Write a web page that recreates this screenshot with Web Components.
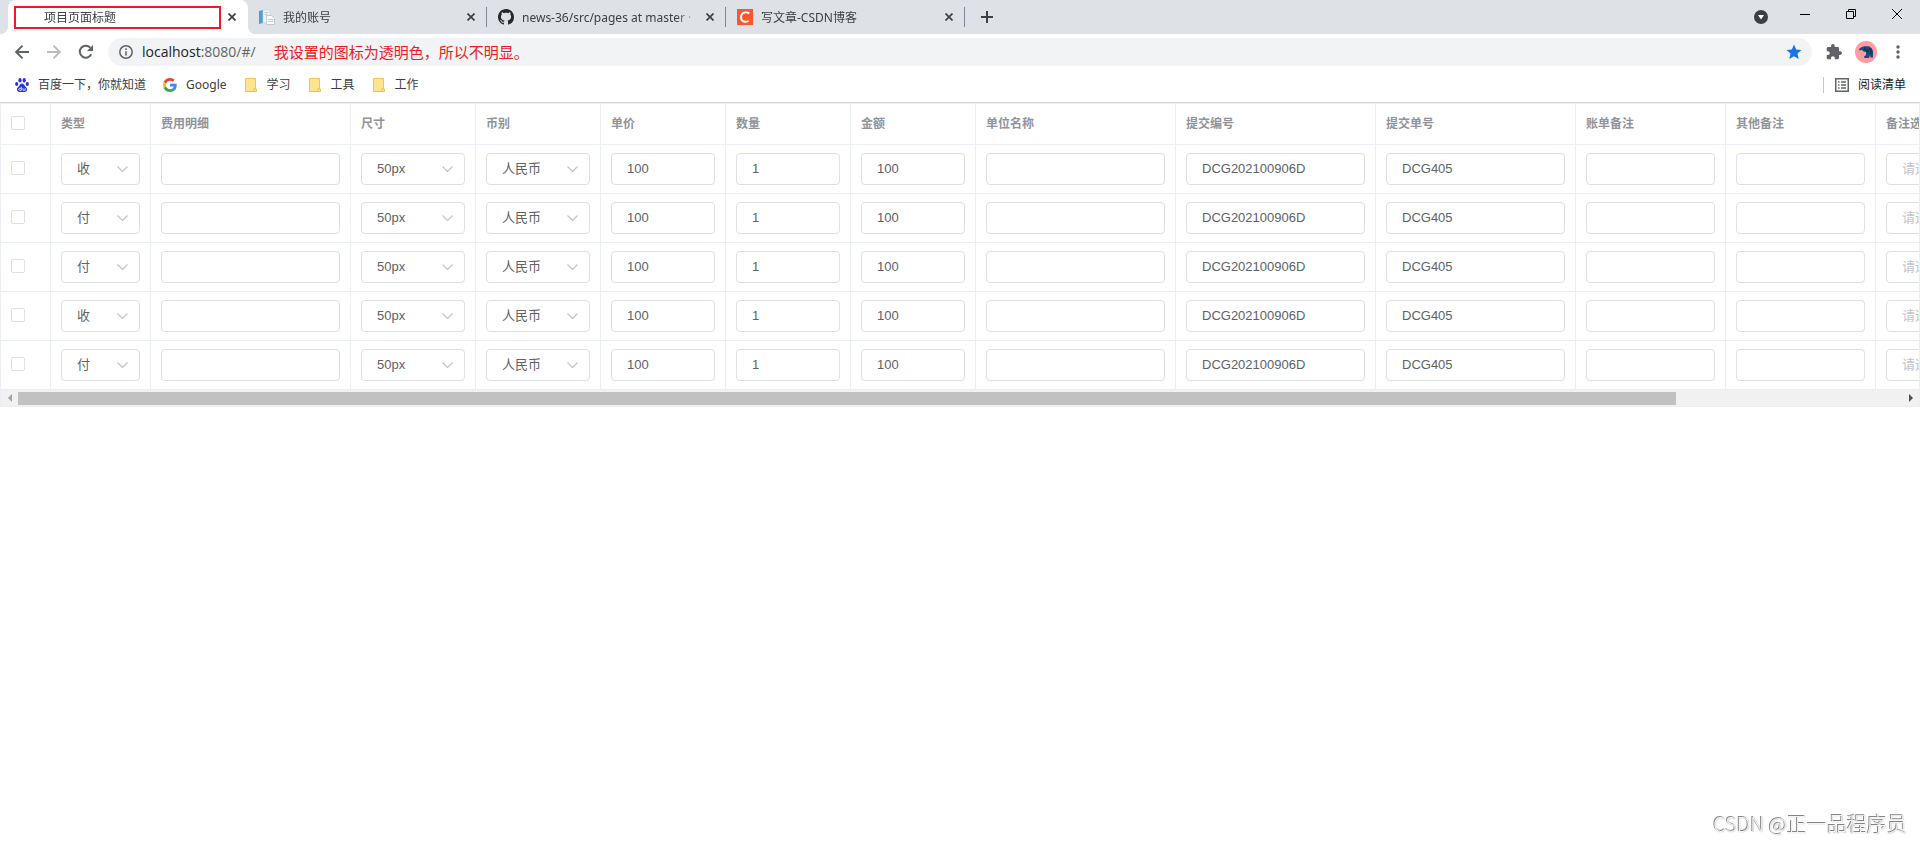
<!DOCTYPE html>
<html lang="zh-CN">
<head>
<meta charset="utf-8">
<title>项目页面标题</title>
<style>
  body { margin: 0; min-height: 100vh; background: #fff; font-family: "Noto Sans", "Noto Sans CJK SC", sans-serif; font-size: 12px; line-height: 16px; color: #3c4043; }
</style>
</head>
<body>
<browser-window></browser-window>

<template id="t-window">
  <style>
    :host { display: block; }
    header { border-bottom: 1px solid #d5d7dd; }
  </style>
  <header>
    <tab-strip></tab-strip>
    <address-bar></address-bar>
    <bookmark-bar></bookmark-bar>
  </header>
  <main><fee-table></fee-table></main>
  <water-mark>CSDN @正一品程序员</water-mark>
</template>

<template id="t-strip">
  <style>
    :host { display: flex; height: 34px; background: #dee1e6; padding-left: 8px; }
    .new, .win button { border: 0; background: none; padding: 0; display: grid; place-items: center; }
    .new { width: 28px; height: 28px; margin: 3px 0 0 8px; }
    .win { margin-left: auto; display: flex; }
    .win button { width: 46px; height: 28px; }
    .win .search { width: 42px; height: 34px; }
  </style>
  <browser-tab active><svg slot="icon" width="16" height="16"></svg>项目页面标题</browser-tab>
  <browser-tab>
    <svg slot="icon" width="16" height="16" viewBox="0 0 16 16"><path d="M0 2l4-1v13l-4 1z" fill="#4a9fd4"/><path d="M4 1h7v13H4z" fill="#f2f5f8" stroke="#c9d2da" stroke-width=".7"/><path d="M5.500 3.500h4M5.500 5.500h3" stroke="#bcc6ce"/><path d="M7.500 6.500h5l3 3v6h-8z" fill="#fafbfc" stroke="#b8c1c9" stroke-width=".8"/><path d="M9 10.500h5M9 12.500h5" stroke="#c5ccd3"/></svg>我的账号</browser-tab>
  <browser-tab divided>
    <svg slot="icon" width="16" height="16" viewBox="0 0 16 16"><path fill="#24292e" d="M8 0C3.58 0 0 3.58 0 8c0 3.54 2.29 6.53 5.47 7.59.4.07.55-.17.55-.38 0-.19-.01-.82-.01-1.49-2.01.37-2.53-.49-2.69-.94-.09-.23-.48-.94-.82-1.13-.28-.15-.68-.52-.01-.53.63-.01 1.08.58 1.23.82.72 1.21 1.87.87 2.33.66.07-.52.28-.87.51-1.07-1.78-.2-3.64-.89-3.64-3.95 0-.87.31-1.59.82-2.15-.08-.2-.36-1.02.08-2.12 0 0 .67-.21 2.2.82.64-.18 1.32-.27 2-.27s1.36.09 2 .27c1.53-1.04 2.2-.82 2.2-.82.44 1.1.16 1.92.08 2.12.51.56.82 1.27.82 2.15 0 3.07-1.87 3.75-3.65 3.95.29.25.54.73.54 1.48 0 1.07-.01 1.93-.01 2.2 0 .21.15.46.55.38A8.01 8.01 0 0 0 16 8c0-4.42-3.58-8-8-8z"/></svg>news-36/src/pages at master · </browser-tab>
  <browser-tab divided>
    <svg slot="icon" width="16" height="16" viewBox="0 0 16 16"><rect width="16" height="16" fill="#fc5531"/><path d="M12.300 4.400C9 2.300 4.300 3.400 4 8c-.2 4.600 4 5.700 7.800 4" fill="none" stroke="#fff" stroke-width="1.900"/></svg>写文章-CSDN博客</browser-tab>
  <button class="new" aria-label="New tab"><svg width="12" height="12"><path d="M6 0v12M0 6h12" stroke="#3c4043" stroke-width="2"/></svg></button>
  <div class="win">
    <button class="search" aria-label="Search tabs"><svg width="14" height="14"><circle cx="7" cy="7" r="7" fill="#3c4043"/><path d="M4 5h6L7 9.500z" fill="#fff"/></svg></button>
    <button aria-label="Minimize"><svg width="10" height="10"><path d="M0 5.500h10" stroke="#000"/></svg></button>
    <button aria-label="Restore"><svg width="10" height="10"><path d="M.5 2.500h7v7h-7zM2.500 2.500v-2h7v7h-2" fill="none" stroke="#000"/></svg></button>
    <button aria-label="Close"><svg width="10" height="10"><path d="M0 0l10 10M10 0L0 10" stroke="#000"/></svg></button>
  </div>
</template>

<template id="t-tab">
  <style>
    :host { display: flex; align-items: center; box-sizing: border-box; width: 239px; height: 34px; padding: 0 8px 0 11px; gap: 8px; position: relative; }
    :host([active]) { width: 240px; padding-left: 12px; background: #fff; border-radius: 8px 8px 0 0; }
    :host([active])::before, :host([active])::after { content: ""; position: absolute; bottom: 0; width: 8px; height: 8px; }
    :host([active])::before { left: -8px; background: radial-gradient(circle at 0 0, #dee1e6 8px, #fff 8px); }
    :host([active])::after { right: -8px; background: radial-gradient(circle at 100% 0, #dee1e6 8px, #fff 8px); }
    :host([divided])::before, :host(:last-of-type)::after { content: ""; position: absolute; top: 7px; width: 1px; height: 20px; background: #80868b; }
    :host([divided])::before { left: -1px; }
    :host(:last-of-type)::after { right: 0; }
    .mark { display: none; }
    :host([active]) .mark { display: block; position: absolute; box-sizing: border-box; left: 6px; top: 6px; width: 207px; height: 23px; border: 2px solid #ec1c24; }
    .title { flex: 1; min-width: 0; padding-top: 1px; overflow: hidden; white-space: nowrap; -webkit-mask-image: linear-gradient(90deg, #000 154px, transparent 176px); mask-image: linear-gradient(90deg, #000 154px, transparent 176px); }
    ::slotted(svg) { display: block; }
    button { width: 16px; height: 16px; border: 0; padding: 0; background: none; display: grid; place-items: center; }
  </style>
  <slot name="icon"></slot>
  <span class="title"><slot></slot></span>
  <button aria-label="Close tab"><svg width="8" height="8"><path d="M.5.500l7 7M7.500.500l-7 7" stroke="#3c4043" stroke-width="1.700"/></svg></button>
  <span class="mark"></span>
</template>

<template id="t-address">
  <style>
    :host { display: flex; align-items: center; height: 36px; padding: 0 6px; }
    button { flex: none; width: 32px; height: 32px; border: 0; padding: 0; background: none; display: grid; place-items: center; }
    .pill { flex: 1; display: flex; align-items: center; height: 28px; margin: 0 6px; padding: 0 2px 0 11px; border-radius: 14px; background: #f1f3f4; }
    .url { margin-left: 9px; font-family: "Open Sans", sans-serif; font-size: 14px; line-height: 20px; color: #5f6368; white-space: nowrap; }
    .url b { font-weight: 400; color: #202124; }
    .note { margin-left: 18px; font-size: 15px; line-height: 20px; color: #ec1c24; white-space: nowrap; }
    .star { margin-left: auto; }
  </style>
  <button aria-label="Back"><svg width="14" height="14"><path d="M14 7H1.500M7.500 .700L1.200 7l6.300 6.300" fill="none" stroke="#5f6368" stroke-width="1.900"/></svg></button>
  <button aria-label="Forward"><svg width="14" height="14"><path d="M0 7h12.500M6.500 .700L12.800 7l-6.300 6.300" fill="none" stroke="#bbbdc0" stroke-width="1.900"/></svg></button>
  <button aria-label="Reload"><svg width="16" height="16" viewBox="0 0 16 16"><path d="M13.200 10.300A6 6 0 1 1 12.300 3.700" fill="none" stroke="#5f6368" stroke-width="2"/><path d="M15 1v6H9z" fill="#5f6368"/></svg></button>
  <div class="pill">
    <svg width="14" height="14"><circle cx="7" cy="7" r="6.200" fill="none" stroke="#5f6368" stroke-width="1.500"/><path d="M7 6.200v4.300M7 3.300v1.600" stroke="#5f6368" stroke-width="1.500"/></svg>
    <span class="url"><b>localhost</b>:8080/#/</span>
    <span class="note">我设置的图标为透明色，所以不明显。</span>
    <button class="star" aria-label="Bookmark"><svg width="16" height="16" viewBox="0 0 16 16"><path d="M8 .500l2.200 5 5.300.500-4 3.600 1.200 5.400L8 12.200 3.300 15l1.200-5.400L.5 6l5.300-.500z" fill="#1a73e8"/></svg></button>
  </div>
  <button aria-label="Extensions"><svg width="16" height="16" viewBox="1 1 22 22"><path fill="#5f6368" d="M20.500 11H19V7a2 2 0 0 0-2-2h-4V3.500a2.500 2.500 0 0 0-5 0V5H4a2 2 0 0 0-2 2v3.800h1.500a2.700 2.700 0 0 1 0 5.400H2V20a2 2 0 0 0 2 2h3.800v-1.500a2.700 2.700 0 0 1 5.400 0V22H17a2 2 0 0 0 2-2v-4h1.500a2.500 2.500 0 0 0 0-5z"/></svg></button>
  <button aria-label="Profile"><svg width="22" height="22" viewBox="0 0 22 22"><circle cx="11" cy="11" r="11" fill="#ff9ca3"/><path d="M4 8l2.500-1.800L9 5.200h5l2.800 2L18 10v6.500h-2.500L15 14l-1 3H9.500l-.5-1.500 2-1.500V11l-2.500-.5L7 9 4.500 9.500z" fill="#1b4a74"/><path d="M9.500 6.500l1 3 2.500 1.500V8M14.500 7l1.500 3v3" stroke="#0c2a48" fill="none"/></svg></button>
  <button aria-label="Menu"><svg width="4" height="14"><circle cx="2" cy="2" r="1.700" fill="#5f6368"/><circle cx="2" cy="7" r="1.700" fill="#5f6368"/><circle cx="2" cy="12" r="1.700" fill="#5f6368"/></svg></button>
</template>

<template id="t-bookmarks">
  <style>
    :host { display: flex; align-items: center; box-sizing: border-box; height: 32px; padding: 0 14px 2px 15px; }
    .reading { margin-left: auto; display: flex; align-items: center; height: 16px; padding: 0 0 0 11px; gap: 9px; border: 0; border-left: 1px solid #c4c7cb; background: none; font: inherit; color: #202124; }
    nav { display: flex; gap: 17px; }
  </style>
  <nav>
    <book-mark><svg slot="icon" width="14" height="14" viewBox="0 0 14 14" fill="#2932e1"><ellipse cx="1.700" cy="6" rx="1.600" ry="2"/><ellipse cx="5" cy="2.300" rx="1.600" ry="2.200"/><ellipse cx="9.200" cy="2.300" rx="1.600" ry="2.200"/><ellipse cx="12.300" cy="6" rx="1.600" ry="2"/><path d="M7 5.600c-1.700 0-2 1.600-3.300 2.800C2.200 9.600 1.700 10.500 2 12c.6 2.500 3 1.900 5 1.900s4.400.6 5-1.900c.3-1.500-.2-2.400-1.700-3.600C9 7.200 8.700 5.600 7 5.600z"/><path d="M6.300 8.700v3.600H4.600c-1.200 0-1.200-2 0-2h1.700M8 10.200v2h2.200v-2" fill="none" stroke="#fff" stroke-width=".8"/></svg>百度一下，你就知道</book-mark>
    <book-mark><svg slot="icon" width="14" height="14" viewBox="0 0 48 48"><path fill="#ea4335" d="M24 9.500c3.540 0 6.710 1.220 9.210 3.600l6.850-6.850C35.900 2.380 30.470 0 24 0 14.620 0 6.510 5.380 2.560 13.220l7.980 6.190C12.430 13.720 17.740 9.500 24 9.500z"/><path fill="#4285f4" d="M46.980 24.550c0-1.570-.15-3.090-.38-4.550H24v9.020h12.940c-.58 2.960-2.260 5.480-4.780 7.180l7.730 6c4.510-4.180 7.090-10.360 7.090-17.650z"/><path fill="#fbbc05" d="M10.530 28.590c-.48-1.450-.76-2.990-.76-4.590s.27-3.140.76-4.590l-7.980-6.190C.92 16.460 0 20.120 0 24s.92 7.540 2.560 10.780l7.970-6.190z"/><path fill="#34a853" d="M24 48c6.480 0 11.930-2.130 15.890-5.810l-7.730-6c-2.150 1.450-4.920 2.300-8.160 2.300-6.260 0-11.570-4.220-13.470-9.910l-7.980 6.190C6.510 42.620 14.620 48 24 48z"/></svg>Google</book-mark>
    <book-mark><folder-icon slot="icon"></folder-icon>学习</book-mark>
    <book-mark><folder-icon slot="icon"></folder-icon>工具</book-mark>
    <book-mark><folder-icon slot="icon"></folder-icon>工作</book-mark>
  </nav>
  <button class="reading"><svg width="14" height="14"><path d="M.75.750h12.500v12.500H.750z" fill="none" stroke="#5f6368" stroke-width="1.500"/><path d="M3 4h1.500M3 7h1.500M3 10h1.500M6 4h5M6 7h5M6 10h5" stroke="#5f6368" stroke-width="1.500"/></svg>阅读清单</button>
</template>

<template id="t-bookmark">
  <style>
    :host { display: block; }
    a { display: flex; align-items: center; gap: 9px; color: #3c4043; text-decoration: none; white-space: nowrap; }
  </style>
  <a href="#/"><slot name="icon"></slot><span><slot></slot></span></a>
</template>

<template id="t-folder">
  <style>:host { display: block; } svg { display: block; }</style>
  <svg width="14" height="14"><path d="M1.500.500h10v10.500h1v2.500h-11z" fill="#ffe48f" stroke="#ecc650"/><path d="M10 13v-2.500h1.500" fill="none" stroke="#ecc650"/></svg>
</template>

<template id="t-table">
  <style>
    :host { display: block; border: 1px solid #ebeef5; }
    .view { overflow: hidden; }
    table { table-layout: fixed; width: 2175px; border-collapse: separate; border-spacing: 0; }
    th, td { box-sizing: border-box; padding: 0 10px; border-right: 1px solid #ebeef5; border-bottom: 1px solid #ebeef5; text-align: left; white-space: nowrap; }
    th { height: 41px; color: #909399; font-weight: 700; }
    td { height: 49px; }
    tbody tr:last-child td { height: 48px; border-bottom: 0; }
    input { appearance: none; display: block; box-sizing: border-box; width: 14px; height: 14px; margin: 0 0 2px; border: 1px solid #dcdfe6; border-radius: 2px; background: #fff; }
    input:checked { background: #409eff; border-color: #409eff; }
  </style>
  <div class="view"><table><colgroup></colgroup><thead><tr></tr></thead><tbody></tbody></table></div>
  <scroll-track></scroll-track>
</template>

<template id="t-scroll">
  <style>
    :host { display: flex; align-items: center; box-sizing: border-box; height: 17px; background: #f1f1f1; border-top: 1px solid #ebeef5; }
    button { flex: none; width: 17px; height: 16px; padding: 0; border: 0; background: none; display: grid; place-items: center; }
    .track { flex: 1; }
    .thumb { width: 88%; height: 13px; background: #c1c1c1; }
  </style>
  <button aria-label="Scroll left"><svg width="4" height="8"><path d="M4 0v8L0 4z" fill="#a3a3a3"/></svg></button>
  <div class="track"><div class="thumb"></div></div>
  <button aria-label="Scroll right"><svg width="4" height="8"><path d="M0 0v8l4-4z" fill="#505050"/></svg></button>
</template>

<template id="t-text">
  <style>
    :host { display: block; }
    input { display: block; box-sizing: border-box; width: 100%; height: 32px; margin: 0; padding: 0 15px 2px; border: 1px solid #dcdfe6; border-radius: 4px; background: #fff; color: #606266; font: 13px "Liberation Sans", "Noto Sans CJK SC", sans-serif; outline: 0; }
    input:focus { border-color: #409eff; }
  </style>
  <input type="text">
</template>

<template id="t-select">
  <style>
    :host { display: grid; align-items: center; }
    select, svg { grid-area: 1 / 1; }
    select { appearance: none; box-sizing: border-box; width: 100%; height: 32px; margin: 0; padding: 0 15px 2px; border: 1px solid #dcdfe6; border-radius: 4px; background: #fff; color: #606266; font: 13px "Liberation Sans", "Noto Sans CJK SC", sans-serif; outline: 0; }
    select:focus { border-color: #409eff; }
    select.empty { color: #c0c4cc; }
    svg { justify-self: end; margin-right: 12px; pointer-events: none; }
  </style>
  <select></select>
  <svg width="11" height="6"><path d="M.5.500l5 5 5-5" fill="none" stroke="#c0c4cc" stroke-width="1.200"/></svg>
</template>

<template id="t-mark">
  <style>
    :host { position: fixed; right: 13px; bottom: 5px; font: 20px/26px "Noto Sans CJK SC", sans-serif; font-weight: 300; color: #f4f4f4; text-shadow: -1px -1px 0 #858585, 0 0 1px #858585; pointer-events: none; white-space: nowrap; }
  </style>
  <slot></slot>
</template>

<script>
  function view(id) {
    return class extends HTMLElement {
      constructor() {
        super();
        this.attachShadow({ mode: "open" }).append(document.getElementById(id).content.cloneNode(true));
      }
    };
  }

  class TextField extends view("t-text") {
    connectedCallback() {
      const input = this.shadowRoot.querySelector("input");
      input.value = this.getAttribute("value") || "";
      input.setAttribute("aria-label", this.getAttribute("label"));
    }
  }

  class SelectField extends view("t-select") {
    connectedCallback() {
      const select = this.shadowRoot.querySelector("select");
      if (select.options.length) return;
      const value = this.getAttribute("value");
      for (const name of this.getAttribute("options").split(",")) {
        select.add(new Option(name, name, false, name === value));
      }
      select.setAttribute("aria-label", this.getAttribute("label"));
      select.classList.toggle("empty", value === "请选择");
    }
  }

  const COLUMNS = [
    { width: 100, name: "类型", options: "收,付" },
    { width: 200, name: "费用明细" },
    { width: 125, name: "尺寸", options: "50px", value: "50px" },
    { width: 125, name: "币别", options: "人民币", value: "人民币" },
    { width: 125, name: "单价", value: "100" },
    { width: 125, name: "数量", value: "1" },
    { width: 125, name: "金额", value: "100" },
    { width: 200, name: "单位名称" },
    { width: 200, name: "提交编号", value: "DCG202100906D" },
    { width: 200, name: "提交单号", value: "DCG405" },
    { width: 150, name: "账单备注" },
    { width: 150, name: "其他备注" },
    { width: 300, name: "备注选择", options: "请选择", value: "请选择" }
  ];
  const TYPES = ["收", "付", "付", "收", "付"];

  class FeeTable extends view("t-table") {
    connectedCallback() {
      const root = this.shadowRoot;
      root.querySelector("colgroup").innerHTML =
        [50, ...COLUMNS.map(c => c.width)].map(w => `<col style="width:${w}px">`).join("");
      root.querySelector("thead tr").innerHTML =
        `<th><input type="checkbox" aria-label="全选"></th>` + COLUMNS.map(c => `<th>${c.name}</th>`).join("");
      root.querySelector("tbody").innerHTML = TYPES.map(type =>
        `<tr><td><input type="checkbox" aria-label="选择"></td>` + COLUMNS.map(c => c.options
          ? `<td><select-field label="${c.name}" options="${c.options}" value="${c.value || type}"></select-field></td>`
          : `<td><text-field label="${c.name}" value="${c.value || ""}"></text-field></td>`).join("") + `</tr>`).join("");
      const pane = root.querySelector(".view");
      root.querySelector("scroll-track").addEventListener("step", e => { pane.scrollLeft += e.detail; });
    }
  }

  class ScrollTrack extends view("t-scroll") {
    connectedCallback() {
      this.shadowRoot.querySelectorAll("button").forEach((b, i) =>
        b.addEventListener("click", () => this.dispatchEvent(new CustomEvent("step", { detail: i ? 40 : -40 }))));
    }
  }

  customElements.define("folder-icon", view("t-folder"));
  customElements.define("book-mark", view("t-bookmark"));
  customElements.define("browser-tab", view("t-tab"));
  customElements.define("tab-strip", view("t-strip"));
  customElements.define("address-bar", view("t-address"));
  customElements.define("bookmark-bar", view("t-bookmarks"));
  customElements.define("text-field", TextField);
  customElements.define("select-field", SelectField);
  customElements.define("scroll-track", ScrollTrack);
  customElements.define("fee-table", FeeTable);
  customElements.define("water-mark", view("t-mark"));
  customElements.define("browser-window", view("t-window"));
</script>
</body>
</html>
